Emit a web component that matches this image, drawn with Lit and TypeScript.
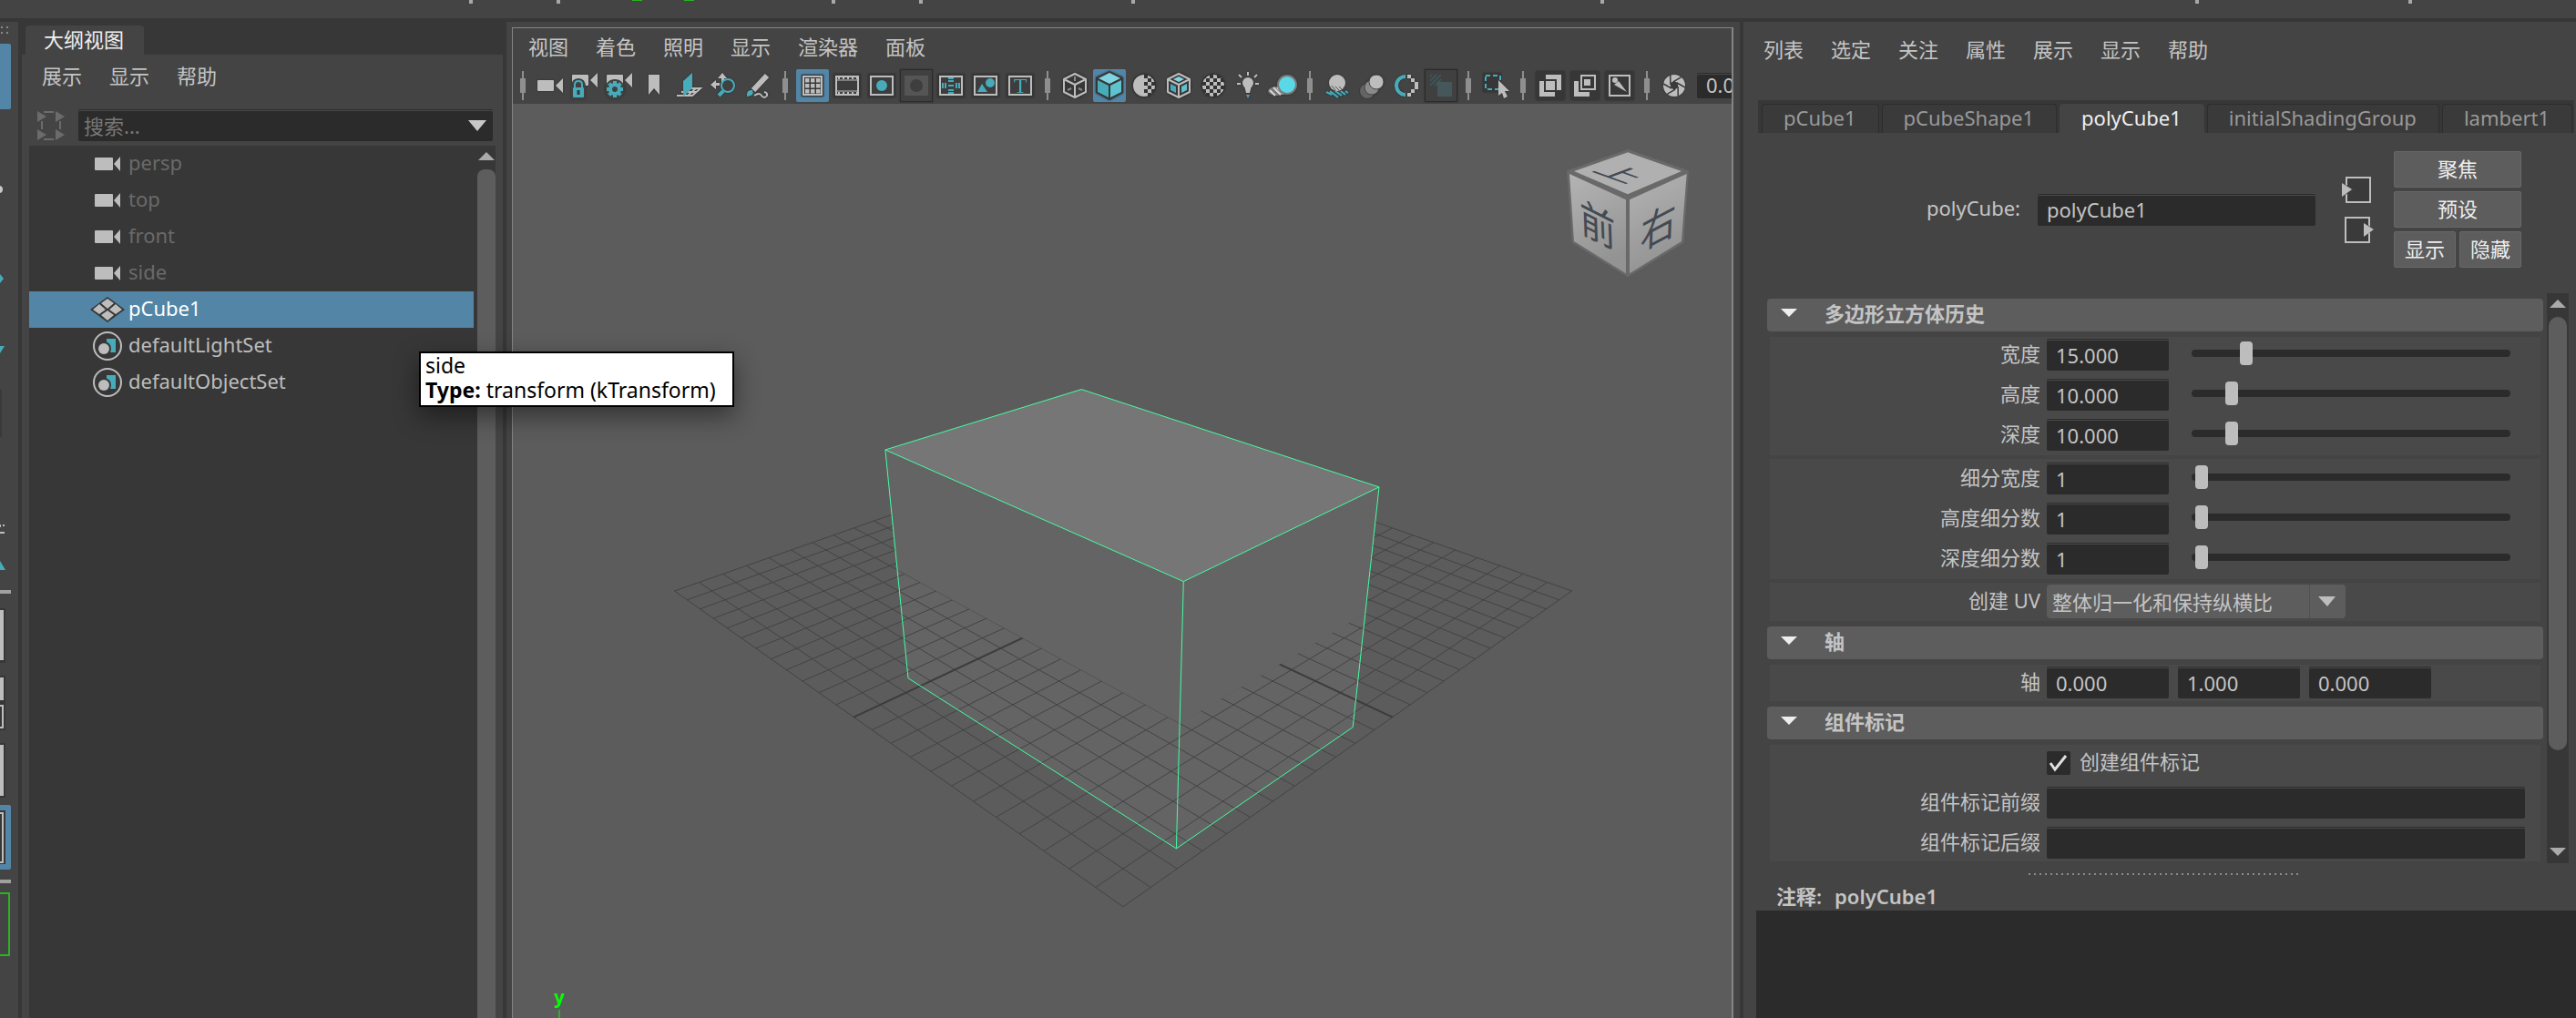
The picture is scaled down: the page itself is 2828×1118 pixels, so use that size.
import { LitElement, html, svg, css, type SVGTemplateResult } from "lit";
import { customElement, state } from "lit/decorators.js";
import { classMap } from "lit/directives/class-map.js";

const LIGHT = "#bdbdbd";
const TEAL = "#47abba";
const DARK = "#373737";

/* ---------- shared text and control styles ---------- */

const base = css`
  * {
    box-sizing: border-box;
  }
  :host {
    font-family: "Noto Sans", "Noto Sans CJK SC", sans-serif;
    font-size: 22px;
    line-height: 28px;
    color: #c4c4c4;
  }
  button,
  input,
  select,
  textarea {
    font: inherit;
    color: inherit;
    margin: 0;
    border: 0;
    padding: 0;
    background: none;
    outline: none;
    border-radius: 0;
  }
  svg {
    display: block;
    flex: none;
  }
  .menu {
    display: flex;
    align-items: center;
    gap: 30px;
    padding-bottom: 4px;
  }
  .menu button {
    white-space: nowrap;
  }
  .field {
    height: 35px;
    padding: 0 10px;
    background: #2b2b2b;
    border-radius: 2px;
    box-shadow: inset 0 1px #2b2b2b, inset 0 2px #4a4a4a;
    min-width: 0;
  }
  .scrollbar {
    display: flex;
    flex-direction: column;
    align-items: center;
    background: #373737;
  }
  .thumb {
    background: #5d5d5d;
    border-radius: 10px;
    width: 20px;
  }
`;

const menu = (items: string[]) => html`
  ${items.map((item) => html`<button type="button">${item}</button>`)}
`;

/* ---------- viewport toolbar icons, each on a 36 x 36 grid ---------- */

const cameraAt = (dy: number) => svg`
  <rect x="4" y=${12 + dy} width="18" height="12" rx="1" fill=${LIGHT} />
  <path d=${`M32 ${10 + dy} L24 ${18 + dy} L32 ${26 + dy} Z`} fill=${LIGHT} />`;

const plate = svg`
  <rect x="3" y="5" width="30" height="26" fill=${DARK} />
  <rect x="6" y="8" width="24" height="20" fill="#3d3d3d" stroke=${LIGHT} stroke-width="2" />`;

const darkTile = svg`<rect x="2" y="2" width="32" height="32" rx="2" fill=${DARK} />`;

const checker = (x0: number, cols: number) => {
  const cells: SVGTemplateResult[] = [];
  for (let r = 0; r < 6; r++)
    for (let c = 0; c < cols; c++)
      if ((r + c) % 2 === 1)
        cells.push(svg`<rect x=${x0 + c * 4} y=${6 + r * 4} width="4" height="4" fill=${LIGHT} />`);
  return cells;
};

const gearTeeth = Array.from(
  { length: 8 },
  (_, i) => svg`<rect x="11" y="13" width="4" height="5" fill=${TEAL} transform=${`rotate(${i * 45} 13 22)`} />`,
);

const blades = Array.from(
  { length: 6 },
  (_, i) => svg`<path d="M21 15 L30 20" stroke="#3a3a3a" stroke-width="1.500" transform=${`rotate(${i * 60} 18 18)`} />`,
);

const cubeEdges = svg`
  <path d="M18 5 L30 11 V25 L18 31 L6 25 V11 Z M6 11 L18 17 L30 11 M18 17 V31" fill="none" stroke=${LIGHT} stroke-width="2" stroke-linejoin="round" />`;

const disabledFrame = svg`<rect x=".5" y=".5" width="35" height="35" fill="#404040" stroke="#2b2b2b" />`;

interface Tool {
  name: string;
  on?: boolean;
  icon: SVGTemplateResult;
}

const tools: (Tool | null)[] = [
  null,
  { name: "选择摄影机", icon: cameraAt(0) },
  {
    name: "锁定摄影机",
    icon: svg`${cameraAt(-6)}
      <path d="M3 33 V20 Q3 10 11 10 Q19 10 19 20 V33 Z" fill="#404040" />
      <path d="M7 21 V17 Q7 13 11 13 Q15 13 15 17 V21" fill="none" stroke=${TEAL} stroke-width="2" />
      <rect x="5" y="20" width="12" height="11" rx="1" fill=${TEAL} />
      <path d="M11 23 V28" stroke="#2f3a3c" stroke-width="3" />`,
  },
  {
    name: "摄影机属性",
    icon: svg`${cameraAt(-6)}
      <circle cx="13" cy="22" r="11" fill="#404040" />
      ${gearTeeth}
      <circle cx="13" cy="22" r="5" fill="none" stroke=${TEAL} stroke-width="4" />`,
  },
  { name: "书签", icon: svg`<path d="M12 6 H24 V28 L18 21 L12 28 Z" fill=${LIGHT} />` },
  {
    name: "图像平面",
    icon: svg`
      <path d="M5 29 H22 L31 21 H20 M12 29 L20 21 M17 29 L26 21 M10 25 H27" fill="none" stroke=${LIGHT} stroke-width="2" />
      <path d="M12 13 L22 4 V21 L12 30 Z" fill=${TEAL} />`,
  },
  {
    name: "二维平移/缩放",
    icon: svg`
      <path d="M17 4 L22 10 H19 V14 H16 V10 H12 Z M4 17 L10 12 V15 H14 V18 H10 V22 Z" fill=${LIGHT} />
      <circle cx="23" cy="18" r="7" fill="#404040" stroke=${TEAL} stroke-width="2" />
      <path d="M18 24 L13 29" stroke=${TEAL} stroke-width="4" />`,
  },
  {
    name: "油性铅笔",
    icon: svg`
      <path d="M13 23 L28 7" stroke=${LIGHT} stroke-width="6" />
      <path d="M6 30 Q5 22 12 23 Q15 29 6 30 Z" fill=${TEAL} />
      <path d="M14 29 Q20 25 22 29 Q25 33 28 29 Q29 26 25 25" fill="none" stroke=${LIGHT} stroke-width="2" />`,
  },
  null,
  {
    name: "栅格",
    on: true,
    icon: svg`
      <rect x="6" y="6" width="24" height="24" fill=${DARK} />
      <rect x="8" y="8" width="20" height="20" fill=${DARK} stroke=${LIGHT} stroke-width="2" />
      ${[10, 16, 22].map((y) =>
        [10, 16, 22].map((x) => svg`<rect x=${x} y=${y} width="4.500" height="4.500" fill=${LIGHT} />`),
      )}`,
  },
  {
    name: "胶片门",
    icon: svg`${plate}
      <path d="M8 10 H29 M8 26 H29" stroke=${LIGHT} stroke-width="2" stroke-dasharray="2 3" />
      <path d="M7 12 H29 M7 24 H29" stroke=${LIGHT} stroke-width="1" />`,
  },
  { name: "分辨率门", icon: svg`${plate}<circle cx="18" cy="18" r="6" fill=${TEAL} />` },
  {
    name: "门遮罩",
    icon: svg`${disabledFrame}<rect x="5" y="7" width="26" height="22" fill="#555" /><circle cx="18" cy="18" r="7" fill="#3e3e3e" />`,
  },
  {
    name: "区域图",
    icon: svg`${plate}
      <path d="M15 10 H21 M15 13 H21 M15 18 H21 M15 23 H21 M15 26 H21 M9 15 V21 M12 15 V21 M24 15 V21 M27 15 V21" stroke=${TEAL} stroke-width="2" />`,
  },
  {
    name: "安全动作",
    icon: svg`${plate}<path d="M9 25 L14 16 L20 25 Z" fill=${TEAL} /><circle cx="23" cy="15" r="5" fill=${TEAL} />`,
  },
  {
    name: "安全标题",
    icon: svg`${plate}<text x="18" y="26" text-anchor="middle" font-family="Liberation Serif, serif" font-size="24" fill=${TEAL}>T</text>`,
  },
  null,
  {
    name: "线框",
    icon: svg`
      <circle cx="18" cy="18" r="14" fill=${DARK} />
      ${cubeEdges}
      <path d="M18 8 V13 M10 23 L14 21 M26 23 L22 21" stroke="#888" stroke-width="2" />`,
  },
  {
    name: "着色",
    on: true,
    icon: svg`
      <path d="M18 2 L33 9 V26 L18 34 L3 26 V9 Z" fill=${DARK} />
      <path d="M18 4 L30 10 L18 16 L6 10 Z" fill="#80d4df" />
      <path d="M5 12 L17 18 V31 L5 25 Z" fill="#47abba" />
      <path d="M31 12 L19 18 V31 L31 25 Z" fill="#5fc3cf" />`,
  },
  {
    name: "默认材质",
    icon: svg`
      <defs><clipPath id="disc"><circle cx="18" cy="18" r="12" /></clipPath></defs>
      <circle cx="18" cy="18" r="13" fill="#333" />
      <g clip-path="url(#disc)"><rect x="6" y="6" width="12" height="24" fill=${LIGHT} />${checker(18, 3)}</g>`,
  },
  {
    name: "着色对象上的线框",
    icon: svg`
      <circle cx="18" cy="18" r="14" fill=${DARK} />
      ${cubeEdges}
      <path d="M18 8 L24 11 L18 14 L12 11 Z" fill="#80d4df" />
      <path d="M9 16 L15 19 V26 L9 23 Z" fill=${TEAL} />
      <path d="M27 16 L21 19 V26 L27 23 Z" fill="#5fc3cf" />`,
  },
  {
    name: "带纹理",
    icon: svg`
      <circle cx="18" cy="18" r="13" fill="#333" />
      <g clip-path="url(#disc)">${checker(6, 6)}</g>`,
  },
  {
    name: "使用所有灯光",
    icon: svg`
      <circle cx="18" cy="15" r="6" fill=${LIGHT} />
      <path d="M14 18 H22 L20 26 H16 Z" fill=${LIGHT} />
      <path d="M16 28 H20 L18 32 Z" fill=${TEAL} />
      <path d="M18 3 V7 M8 6 L11 9 M28 6 L25 9 M6 16 H10 M26 16 H30" stroke=${LIGHT} stroke-width="2" />`,
  },
  {
    name: "阴影",
    icon: svg`
      <ellipse cx="12" cy="24" rx="10" ry="5" fill="#777" />
      <path d="M4 23 L10 29 M8 20 L16 28 M12 20 L19 27" stroke="#d8d8d8" stroke-width="2" />
      <circle cx="23" cy="17" r="11" fill="#7a7a7a" />
      <circle cx="23" cy="17" r="9" fill="#5ad8e6" />`,
  },
  null,
  {
    name: "屏幕空间环境光遮挡",
    icon: svg`
      <path d="M5 26 L12 24 H24 L31 26 L18 31 Z" fill="#2f4d52" />
      <path d="M6 25 L12 28 M10 24 L19 31 M16 24 L23 29 M22 24 L27 28 M27 24 L30 26" stroke=${TEAL} stroke-width="2" />
      <circle cx="18" cy="15" r="9" fill=${LIGHT} />
      <path d="M12 18 L16 23 M16 19 L20 23 M20 19 L23 22" stroke="#555" stroke-width="1" />`,
  },
  {
    name: "运动模糊",
    icon: svg`
      <circle cx="13" cy="24" r="8" fill="#646464" />
      <circle cx="18" cy="20" r="8" fill="#8a8a8a" stroke="#444" />
      <circle cx="23" cy="14" r="8" fill=${LIGHT} stroke="#444" />`,
  },
  {
    name: "多采样抗锯齿",
    icon: svg`
      <path d="M17 8 A10 10 0 0 0 17 28" fill="none" stroke=${TEAL} stroke-width="4" />
      <path d="M19 6 h4 v4 h-4z M23 10 h4 v4 h-4z M27 14 h4 v8 h-4z M23 22 h4 v4 h-4z M19 26 h4 v4 h-4z" fill=${LIGHT} />`,
  },
  {
    name: "景深",
    icon: svg`${disabledFrame}
      <path d="M6 8 L8 6 M6 13 L13 6 M6 18 L18 6 M11 18 L18 11" stroke="#3d5558" stroke-width="2" />
      <rect x="14" y="14" width="16" height="16" fill="#46575b" />`,
  },
  null,
  {
    name: "隔离选择",
    icon: svg`
      <rect x="4" y="4" width="20" height="21" fill=${DARK} />
      <rect x="7" y="7" width="16" height="15" fill="none" stroke=${TEAL} stroke-width="2" stroke-dasharray="5 3" />
      <path d="M21 12 L33 24 L28 24 L31 30 L27 32 L25 26 L21 29 Z" fill=${LIGHT} />`,
  },
  null,
  {
    name: "X 射线显示",
    icon: svg`${darkTile}
      <path d="M6 13 H11 V25 H23 V30 H6 Z" fill=${LIGHT} />
      <path d="M13 6 H30 V23 H25 V11 H13 Z" fill=${LIGHT} />
      <rect x="13" y="13" width="10" height="10" fill=${LIGHT} />`,
  },
  {
    name: "X 射线显示活动组件",
    icon: svg`${darkTile}
      <path d="M6 13 H11 V25 H23 V30 H6 Z" fill=${LIGHT} />
      <rect x="14" y="7" width="15" height="15" fill="none" stroke=${LIGHT} stroke-width="2" />
      <rect x="17" y="11" width="7" height="7" fill=${LIGHT} />`,
  },
  {
    name: "X 射线显示关节",
    icon: svg`${darkTile}
      <rect x="7" y="7" width="22" height="22" fill="none" stroke=${LIGHT} stroke-width="2" />
      <circle cx="13" cy="12" r="3" fill=${LIGHT} />
      <path d="M12 17 L17 13 L26 25 Z" fill=${LIGHT} />`,
  },
  null,
  {
    name: "曝光",
    icon: svg`
      <circle cx="18" cy="18" r="12" fill=${LIGHT} />
      <path d="M18 13 L22 15 L22 20 L18 23 L14 20 L14 15 Z" fill="#3a3a3a" />
      ${blades}`,
  },
];

/* ---------- 3D scene: default perspective camera at (28, 21, 28) ---------- */

const GROUND = Math.hypot(28, 28);
const DIST = Math.hypot(GROUND, 21);
const COS = GROUND / DIST;
const SIN = 21 / DIST;
const FOCAL = 1301;
const CENTER = { x: 670, y: 535 };

function project(x: number, y: number, z: number): string {
  const right = (x - z) / Math.SQRT2;
  const ahead = GROUND - (x + z) / Math.SQRT2;
  const depth = ahead * COS - (y - 21) * SIN;
  const up = ahead * SIN + (y - 21) * COS;
  return `${(CENTER.x + (FOCAL * right) / depth).toFixed(1)},${(CENTER.y - (FOCAL * up) / depth).toFixed(1)}`;
}

const sides = (lo: number, hi: number) =>
  [
    [project(-7.5, hi, 5), project(7.5, hi, 5), project(7.5, lo, 5), project(-7.5, lo, 5)],
    [project(7.5, hi, 5), project(7.5, hi, -5), project(7.5, lo, -5), project(7.5, lo, 5)],
  ].map((p) => svg`<polygon points=${p.join(" ")} fill="#646464" />`);

const steps = Array.from({ length: 25 }, (_, i) => i - 12);
const gridLines = steps
  .filter((i) => i !== 0)
  .map((i) => `M${project(i, 0, -12)} L${project(i, 0, 12)} M${project(-12, 0, i)} L${project(12, 0, i)}`)
  .join(" ");
const axisLines = `M${project(0, 0, -12)} L${project(0, 0, 12)} M${project(-12, 0, 0)} L${project(12, 0, 0)}`;
const topFace = [project(-7.5, 5, -5), project(7.5, 5, -5), project(7.5, 5, 5), project(-7.5, 5, 5)].join(" ");
const wire = [
  `M${project(-7.5, 5, 5)} L${project(-7.5, -5, 5)} L${project(7.5, -5, 5)} L${project(7.5, -5, -5)} L${project(7.5, 5, -5)}`,
  `M${project(7.5, 5, 5)} L${project(7.5, -5, 5)}`,
].join(" ");

@customElement("scene-view")
class SceneView extends LitElement {
  static styles = [
    base,
    css`
      :host {
        display: flex;
        flex-direction: column;
        background: #444;
        padding: 6px 7px 0 6px;
        min-width: 0;
      }
      .frame {
        flex: 1;
        display: flex;
        flex-direction: column;
        border: 1px solid #858585;
        border-right-width: 2px;
        border-bottom: 0;
        background: #444;
        min-width: 0;
        overflow: hidden;
      }
      .menu {
        height: 43px;
        padding-left: 17px;
      }
      .toolbar {
        display: flex;
        align-items: center;
        height: 40px;
        overflow: hidden;
      }
      .tool {
        flex: none;
        width: 36px;
        height: 36px;
        margin: 0 1px;
        border-radius: 2px;
      }
      .tool.on {
        background: #5285a6;
      }
      .tool svg {
        filter: drop-shadow(0 0 1px #2b2b2b);
      }
      .sep {
        flex: none;
        width: 22px;
        height: 32px;
      }
      .exposure {
        flex: none;
        width: 100px;
        height: 28px;
        margin-left: 6px;
        padding-bottom: 2px;
      }
      .canvas {
        flex: 1;
        background: #5c5c5c;
        overflow: hidden;
      }
      .canvas svg {
        width: 100%;
        height: auto;
      }
      .face {
        font-family: "Noto Sans CJK SC", sans-serif;
        font-weight: 400;
        font-size: 124px;
        fill: #434a53;
        text-anchor: middle;
        dominant-baseline: central;
      }
      .axis {
        font-size: 20px;
        font-weight: 700;
        fill: #0f0;
        text-anchor: middle;
      }
    `,
  ];

  render() {
    return html`
      <div class="frame">
        <nav class="menu">${menu(["视图", "着色", "照明", "显示", "渲染器", "面板"])}</nav>
        <div class="toolbar">
          ${tools.map((tool) =>
            tool
              ? html`<button type="button" class=${classMap({ tool: true, on: !!tool.on })} aria-label=${tool.name}>
                  <svg width="36" height="36" viewBox="0 0 36 36">${tool.icon}</svg>
                </button>`
              : html`<svg class="sep" viewBox="0 0 22 32">
                  <path d="M11 0 V32" stroke="#8f8f8f" stroke-width="2" />
                  <rect x="8" y="8" width="6" height="16" fill="#8f8f8f" />
                </svg>`,
          )}
          <input class="field exposure" aria-label="曝光值" value="0.00" />
        </div>
        <div class="canvas">
          <svg viewBox="0 0 1338 1004">
            ${sides(-5, 0)}
            <path d=${gridLines} stroke="#434343" fill="none" />
            <path d=${axisLines} stroke="#3c3c3c" stroke-width="2" fill="none" />
            ${sides(0, 5)}
            <polygon points=${topFace} fill="#767676" stroke="#43ffa3" />
            <path d=${wire} stroke="#43ffa3" fill="none" />
            <text class="axis" x="51" y="988">y</text>
            <path d="M51 995 V1004" stroke="#0f0" />
            <defs>
              <linearGradient id="shade" x1="0" y1="0" x2=".3" y2="1">
                <stop offset="0" stop-color="#b4b4b4" />
                <stop offset="1" stop-color="#939393" />
              </linearGradient>
            </defs>
            <g transform="translate(1097 6) scale(.3333)">
              <path d="M381 132 L582 202 L565 440 L381 553 L198 440 L180 202 Z" fill="#696969" />
              <path d="M381 142 L558 204 L381 280 L204 204 Z" fill="#b0b0b0" />
              <path d="M189 213 L375 298 V541 L204 435 Z" fill="url(#shade)" />
              <path d="M575 213 L387 298 V541 L558 435 Z" fill="url(#shade)" />
              <text class="face" transform="matrix(1 .36 -.75 .28 362 210)">上</text>
              <text class="face" transform="matrix(.95 .48 .04 1.1 282 372)">前</text>
              <text class="face" transform="matrix(.95 -.5 -.04 1.1 482 378)">右</text>
            </g>
          </svg>
        </div>
      </div>
    `;
  }
}

/* ---------- outliner ---------- */

type NodeKind = "camera" | "mesh" | "set";

const nodeIcons: Record<NodeKind, SVGTemplateResult> = {
  camera: svg`
    <rect x="8" y="13" width="20" height="14" rx="1" fill=${LIGHT} />
    <path d="M36 12 L29 20 L36 28 Z" fill=${LIGHT} />`,
  mesh: svg`
    <path d="M22 6 L41 20 L22 34 L3 20 Z" fill=${DARK} />
    <path d="M22 8 L29 13 L22 19 L15 13 Z M13 14 L20 20 L13 25 L6 20 Z M31 14 L38 20 L31 25 L24 20 Z M22 21 L29 26 L22 32 L15 26 Z" fill=${LIGHT} />`,
  set: svg`
    <circle cx="22" cy="20" r="15" fill="none" stroke=${LIGHT} stroke-width="2" />
    <rect x="21" y="12" width="10" height="15" fill=${TEAL} />
    <circle cx="18" cy="23" r="8" fill=${DARK} />
    <circle cx="18" cy="23" r="6" fill=${LIGHT} />`,
};

@customElement("outliner-panel")
class OutlinerPanel extends LitElement {
  static styles = [
    base,
    css`
      :host {
        display: flex;
        flex-direction: column;
        background: #444;
      }
      .tabs {
        height: 36px;
        padding: 4px 4px 0;
        background: #373737;
        display: flex;
      }
      .tab {
        padding: 0 22px 3px 20px;
        background: #444;
        color: #eee;
        border-radius: 4px 4px 0 0;
      }
      .menu {
        height: 50px;
        padding-left: 22px;
      }
      .search {
        display: flex;
        align-items: center;
        gap: 15px;
        height: 50px;
        padding: 5px 11px 0 17px;
      }
      .box {
        flex: 1;
        display: grid;
        align-items: center;
      }
      .box > * {
        grid-area: 1 / 1;
      }
      .box .field {
        padding-left: 6px;
      }
      .box .field::placeholder {
        color: #777;
        opacity: 1;
      }
      .box svg {
        justify-self: end;
        margin-right: 7px;
        pointer-events: none;
      }
      .tree {
        flex: 1;
        display: flex;
        gap: 4px;
        margin: 0 8px;
        background: #373737;
      }
      ul {
        flex: 1;
        list-style: none;
        margin: 0;
        padding: 0;
      }
      li {
        display: flex;
        align-items: center;
        gap: 1px;
        height: 40px;
        padding-left: 64px;
        color: #bdbdbd;
      }
      li span {
        padding-bottom: 4px;
      }
      li.dim {
        color: #6a6a6a;
      }
      li.selected {
        background: #5285a6;
        color: #fff;
      }
      .scrollbar .thumb {
        flex: 1;
        border-radius: 8px 8px 0 0;
      }
    `,
  ];

  @state() private selected = "pCube1";

  private nodes: { name: string; kind: NodeKind; dim?: boolean }[] = [
    { name: "persp", kind: "camera", dim: true },
    { name: "top", kind: "camera", dim: true },
    { name: "front", kind: "camera", dim: true },
    { name: "side", kind: "camera", dim: true },
    { name: "pCube1", kind: "mesh" },
    { name: "defaultLightSet", kind: "set" },
    { name: "defaultObjectSet", kind: "set" },
  ];

  render() {
    return html`
      <div class="tabs"><button type="button" class="tab">大纲视图</button></div>
      <nav class="menu">${menu(["展示", "显示", "帮助"])}</nav>
      <div class="search">
        <svg width="30" height="34" viewBox="0 0 30 34">
          <path d="M0 1 L10 7 L0 13 Z M20 1 L30 7 L20 13 Z M0 21 L10 27 L0 33 Z M20 21 L30 27 L20 33 Z" fill="#6b6b6b" />
          <path d="M7 2 H18 M7 32 H18 M5 12 V21 M25 12 V21" stroke="#6b6b6b" stroke-width="2" />
        </svg>
        <div class="box">
          <input class="field" type="text" aria-label="搜索" placeholder="搜索..." />
          <svg width="20" height="12" viewBox="0 0 20 12"><path d="M0 0 H20 L10 12 Z" fill="#c8c8c8" /></svg>
        </div>
      </div>
      <div class="tree">
        <ul>
          ${this.nodes.map(
            (node) => html`
              <li
                class=${classMap({ dim: !!node.dim, selected: node.name === this.selected })}
                @click=${() => (this.selected = node.name)}
              >
                <svg width="44" height="40" viewBox="0 0 44 40">${nodeIcons[node.kind]}</svg>
                <span>${node.name}</span>
              </li>
            `,
          )}
        </ul>
        <div class="scrollbar">
          <svg width="20" height="26" viewBox="0 0 20 26"><path d="M10 7 L19 16 H1 Z" fill="#aaa" /></svg>
          <div class="thumb"></div>
        </div>
      </div>
    `;
  }
}

/* ---------- attribute editor ---------- */

interface NumberRow {
  label: string;
  value: string;
  min: number;
  max: number;
}

@customElement("attribute-editor")
class AttributeEditor extends LitElement {
  static styles = [
    base,
    css`
      :host {
        display: flex;
        flex-direction: column;
        background: #444;
        min-width: 0;
      }
      .menu {
        height: 64px;
        padding-left: 22px;
      }
      .tabs {
        display: flex;
        gap: 3px;
        margin: 22px 2px 0 16px;
        padding: 4px 4px 0;
        background: #373737;
        overflow: hidden;
      }
      .tab {
        height: 32px;
        padding: 0 24px 4px 23px;
        border: 1px solid #2d2d2d;
        border-bottom: 0;
        border-radius: 4px 4px 0 0;
        background: #3a3a3a;
        color: #999;
        white-space: nowrap;
      }
      .tab.current {
        background: #444;
        border-color: #444;
        color: #eee;
      }
      .head {
        display: flex;
        justify-content: flex-end;
        align-items: center;
        padding: 20px 60px 28px 0;
      }
      .head label {
        padding-bottom: 4px;
      }
      .head .field {
        width: 305px;
        margin: 0 28px 0 19px;
      }
      .ports {
        display: flex;
        flex-direction: column;
        gap: 12px;
        margin-right: 22px;
      }
      .actions {
        display: grid;
        grid-template-columns: 68px 68px;
        gap: 4px;
      }
      .actions button {
        height: 40px;
        padding-bottom: 3px;
        background: #5d5d5d;
        border: 1px solid #686868;
        border-radius: 2px;
        color: #eee;
      }
      .actions .wide {
        grid-column: span 2;
      }
      .scroll {
        display: flex;
        gap: 4px;
        padding: 0 8px 0 26px;
      }
      .sections {
        flex: 1;
        min-width: 0;
        display: flex;
        flex-direction: column;
        gap: 6px;
        padding: 6px 0 2px;
      }
      h2 {
        display: flex;
        align-items: center;
        gap: 30px;
        height: 36px;
        margin: 0;
        padding-left: 15px;
        background: #5d5d5d;
        border-radius: 4px;
        font-size: 22px;
        font-weight: 600;
      }
      h2 span {
        padding-bottom: 4px;
      }
      .body {
        margin: 0 3px;
        background: #494949;
      }
      .group {
        display: flex;
        flex-direction: column;
        gap: 9px;
        padding: 4px 17px 5px 0;
      }
      .group:first-child {
        padding-top: 2px;
      }
      .group:last-child {
        padding-top: 2px;
        padding-bottom: 3px;
      }
      .group + .group {
        border-top: 4px solid #444;
      }
      .row {
        display: grid;
        grid-template-columns: 297px minmax(0, 1fr);
        column-gap: 7px;
        align-items: center;
        min-height: 35px;
      }
      .row label,
      .row > .name {
        padding-bottom: 3px;
        text-align: right;
      }
      .line {
        grid-column: 2;
        display: flex;
        align-items: center;
        gap: 10px;
        min-width: 0;
      }
      .num {
        width: 134px;
      }
      .full {
        flex: 1;
      }
      .slider {
        flex: 1;
        display: grid;
        align-items: center;
        min-width: 0;
        margin: 0 16px 0 15px;
        padding-bottom: 3px;
      }
      .slider::before {
        content: "";
        grid-area: 1 / 1;
        height: 8px;
        border-radius: 4px;
        background: #2b2b2b;
      }
      .slider input {
        grid-area: 1 / 1;
        appearance: none;
        height: 26px;
        width: 100%;
        padding: 0 4px;
        min-width: 0;
      }
      .slider input::-webkit-slider-thumb {
        appearance: none;
        width: 14px;
        height: 26px;
        border-radius: 4px;
        background: #bdbdbd;
      }
      .combo {
        display: grid;
        width: 328px;
        border-radius: 4px;
        background: #5d5d5d;
      }
      .combo > * {
        grid-area: 1 / 1;
      }
      .combo select {
        appearance: none;
        height: 37px;
        padding: 0 44px 0 6px;
      }
      .combo svg {
        justify-self: end;
        pointer-events: none;
      }
      .check {
        appearance: none;
        width: 26px;
        height: 26px;
        border-radius: 2px;
        background: #2b2b2b;
      }
      .tick {
        display: grid;
      }
      .tick > * {
        grid-area: 1 / 1;
      }
      .tick svg {
        pointer-events: none;
        visibility: hidden;
      }
      .check:checked + svg {
        visibility: visible;
      }
      .bar {
        width: 24px;
      }
      .bar .thumb {
        height: 476px;
      }
      .bar svg:last-child {
        margin-top: auto;
      }
      .splitter {
        height: 24px;
        display: flex;
        justify-content: center;
        align-items: center;
        padding-left: 10px;
      }
      .dots {
        width: 298px;
        height: 2px;
        background: repeating-linear-gradient(90deg, #8c8c8c 0 2px, transparent 2px 6px);
      }
      .notes-label {
        display: flex;
        gap: 14px;
        height: 28px;
        padding-left: 36px;
        line-height: 24px;
        font-weight: 600;
      }
      .notes {
        flex: 1;
        min-height: 118px;
        margin-left: 14px;
        padding: 8px;
        background: #2b2b2b;
        resize: none;
      }
    `,
  ];

  @state() private tab = "polyCube1";

  private sizes: NumberRow[] = [
    { label: "宽度", value: "15.000", min: 0, max: 100 },
    { label: "高度", value: "10.000", min: 0, max: 100 },
    { label: "深度", value: "10.000", min: 0, max: 100 },
  ];

  private divisions: NumberRow[] = [
    { label: "细分宽度", value: "1", min: 1, max: 50 },
    { label: "高度细分数", value: "1", min: 1, max: 50 },
    { label: "深度细分数", value: "1", min: 1, max: 50 },
  ];

  private numberRow = (row: NumberRow) => html`
    <div class="row">
      <label for=${row.label}>${row.label}</label>
      <div class="line">
        <input class="field num" id=${row.label} .value=${row.value} />
        <div class="slider">
          <input
            type="range"
            aria-label=${row.label}
            min=${row.min}
            max=${row.max}
            step="any"
            .value=${String(parseFloat(row.value))}
          />
        </div>
      </div>
    </div>
  `;

  private heading = (title: string) => html`
    <h2>
      <svg width="18" height="28" viewBox="0 0 18 28"><path d="M0 7 H18 L9 16 Z" fill="#eee" /></svg>
      <span>${title}</span>
    </h2>
  `;

  render() {
    const tabs = ["pCube1", "pCubeShape1", "polyCube1", "initialShadingGroup", "lambert1"];
    return html`
      <nav class="menu">${menu(["列表", "选定", "关注", "属性", "展示", "显示", "帮助"])}</nav>
      <div class="tabs">
        ${tabs.map(
          (name) => html`
            <button
              type="button"
              class=${classMap({ tab: true, current: name === this.tab })}
              @click=${() => (this.tab = name)}
            >
              ${name}
            </button>
          `,
        )}
      </div>
      <div class="head">
        <label for="node">polyCube:</label>
        <input class="field" id="node" value="polyCube1" />
        <div class="ports">
          <button type="button" aria-label="输入连接">
            <svg width="36" height="32" viewBox="0 0 36 32">
              <rect x="6" y="3" width="26" height="27" fill="#3a3a3a" stroke=${LIGHT} stroke-width="2" />
              <path d="M0 8 L14 16 L0 25 Z" fill="#444" />
              <path d="M1 9 L12 16 L1 24 Z" fill=${LIGHT} />
            </svg>
          </button>
          <button type="button" aria-label="输出连接">
            <svg width="36" height="32" viewBox="0 0 36 32">
              <rect x="5" y="3" width="26" height="27" fill="#3a3a3a" stroke=${LIGHT} stroke-width="2" />
              <path d="M23 6 L36 16 L23 26 Z" fill="#3a3a3a" />
              <path d="M25 9 L36 16 L25 24 Z" fill=${LIGHT} />
            </svg>
          </button>
        </div>
        <div class="actions">
          <button type="button" class="wide">聚焦</button>
          <button type="button" class="wide">预设</button>
          <button type="button">显示</button>
          <button type="button">隐藏</button>
        </div>
      </div>

      <div class="scroll">
        <div class="sections">
          ${this.heading("多边形立方体历史")}
          <div class="body">
            <div class="group">${this.sizes.map(this.numberRow)}</div>
            <div class="group">${this.divisions.map(this.numberRow)}</div>
            <div class="group">
              <div class="row">
                <label for="uv">创建 UV</label>
                <div class="combo">
                  <select id="uv">
                    <option>整体归一化和保持纵横比</option>
                  </select>
                  <svg width="40" height="37" viewBox="0 0 40 37">
                    <path d="M0 0 V37" stroke="#505050" stroke-width="2" />
                    <path d="M10 13 H29 L20 24 Z" fill=${LIGHT} />
                  </svg>
                </div>
              </div>
            </div>
          </div>

          ${this.heading("轴")}
          <div class="body">
            <div class="group">
              <div class="row">
                <span class="name">轴</span>
                <div class="line">
                  <input class="field num" aria-label="轴 X" value="0.000" />
                  <input class="field num" aria-label="轴 Y" value="1.000" />
                  <input class="field num" aria-label="轴 Z" value="0.000" />
                </div>
              </div>
            </div>
          </div>

          ${this.heading("组件标记")}
          <div class="body">
            <div class="group">
              <div class="row">
                <div class="line">
                  <span class="tick">
                    <input class="check" type="checkbox" id="tags" checked />
                    <svg width="26" height="26" viewBox="0 0 26 26">
                      <path d="M4 13 L9 20 L21 5" fill="none" stroke="#e0e0e0" stroke-width="3" />
                    </svg>
                  </span>
                  <label for="tags">创建组件标记</label>
                </div>
              </div>
              <div class="row">
                <label for="prefix">组件标记前缀</label>
                <div class="line"><input class="field full" id="prefix" /></div>
              </div>
              <div class="row">
                <label for="suffix">组件标记后缀</label>
                <div class="line"><input class="field full" id="suffix" /></div>
              </div>
            </div>
          </div>
        </div>
        <div class="scrollbar bar">
          <svg width="20" height="26" viewBox="0 0 20 26"><path d="M10 7 L19 16 H1 Z" fill="#aaa" /></svg>
          <div class="thumb"></div>
          <svg width="20" height="26" viewBox="0 0 20 26"><path d="M10 18 L19 9 H1 Z" fill="#aaa" /></svg>
        </div>
      </div>

      <div class="splitter"><div class="dots"></div></div>
      <label class="notes-label" for="notes"><span>注释:</span><span>polyCube1</span></label>
      <textarea class="notes" id="notes"></textarea>
    `;
  }
}

/* ---------- application shell ---------- */

@customElement("app-root")
class AppRoot extends LitElement {
  static styles = [
    base,
    css`
      :host {
        display: flex;
        flex-direction: column;
        position: relative;
        min-height: 100vh;
        background: #373737;
        overflow: hidden;
      }
      .shelf {
        height: 20px;
        margin-bottom: 4px;
        background: #444;
      }
      .work {
        flex: 1;
        display: grid;
        grid-template-columns: 20px minmax(0, 528fr) minmax(0, 1354fr) minmax(0, 914fr);
        gap: 4px;
      }
      .toolbox {
        background: #444;
      }
      .tooltip {
        position: absolute;
        left: 460px;
        top: 386px;
        padding: 0 18px 3px 5px;
        border: 2px solid #000;
        background: #fff;
        color: #000;
        font-size: 23px;
        line-height: 27px;
        box-shadow: 0 10px 28px rgba(0, 0, 0, 0.45);
      }
    `,
  ];

  render() {
    return html`
      <div class="shelf">
        <svg width="100%" height="20">
          ${[515, 611, 913, 1009, 1242, 1757, 2410, 2644].map(
            (x) => svg`<rect x=${x} y="0" width="4" height="4" fill="#a8a8a8" />`,
          )}
          ${[694, 751].map((x) => svg`<rect x=${x} y="0" width="11" height="1" fill="#2bb321" />`)}
        </svg>
      </div>
      <main class="work">
        <div class="toolbox">
          <svg width="20" height="1094" viewBox="0 24 20 1094">
            <path d="M1 29 h2 v2 h-2z M7 29 h2 v2 h-2z M1 35 h2 v2 h-2z M7 35 h2 v2 h-2z" fill="#8a8a8a" />
            <rect x="-4" y="48" width="16" height="72" rx="2" fill="#5285a6" />
            <circle cx="-1" cy="208" r="4" fill="#c8c8c8" />
            <path d="M0 301 L4 306 L0 311 Z M0 380 H5 L0 388 Z M0 616 L6 626 H0 Z" fill=${TEAL} />
            <rect x="0" y="428" width="2" height="52" fill="#393939" />
            <path d="M0 576 h1 v3 h-1z M3 576 h2 v2 h-2z M0 584 h5 v2 h-5z" fill=${LIGHT} />
            <path d="M0 648 h12 v4 h-12z M0 966 h12 v4 h-12z" fill="#a0a0a0" />
            <path d="M0 668 h6 v60 h-6z M0 742 h6 v60 h-6z M0 816 h6 v60 h-6z" fill=${DARK} />
            <path d="M0 670 h4 v55 h-4z M0 744 h4 v25 h-4z M0 818 h4 v56 h-4z" fill=${LIGHT} />
            <path d="M0 775 H3 V799 H0" fill="none" stroke=${LIGHT} stroke-width="2" />
            <rect x="-4" y="884" width="16" height="71" rx="2" fill="#5285a6" />
            <rect x="0" y="890" width="6" height="59" fill=${DARK} />
            <path d="M0 893 H3 V947 H0" fill="none" stroke=${LIGHT} stroke-width="2" />
            <path d="M0 981 H10 V1049 H0" fill="none" stroke="#2bb321" stroke-width="2" />
          </svg>
        </div>
        <outliner-panel></outliner-panel>
        <scene-view></scene-view>
        <attribute-editor></attribute-editor>
      </main>
      <div class="tooltip" role="tooltip">side<br /><b>Type:</b> transform (kTransform)</div>
    `;
  }
}
